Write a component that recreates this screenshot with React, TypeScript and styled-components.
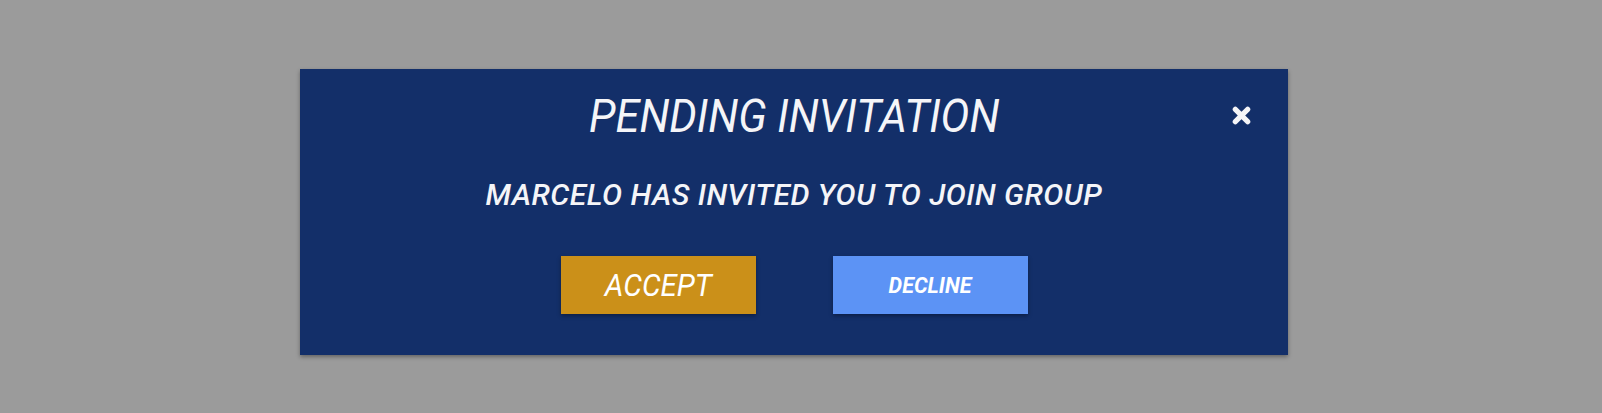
import * as React from "react";
import styled, { createGlobalStyle } from "styled-components";

const GlobalStyle = createGlobalStyle`
  html, body {
    margin: 0;
    padding: 0;
    background: #9b9b9b;
    font-family: Roboto, "Liberation Sans", sans-serif;
  }
`;

const Page = styled.div`
  height: 413px;
  padding-top: 69px;
  padding-left: 300px;
  box-sizing: border-box;
`;

const Modal = styled.div`
  position: relative;
  width: 988px;
  height: 286px;
  box-sizing: border-box;
  padding-top: 26px;
  background: #132f69;
  box-shadow: 0 2px 4px rgba(0, 0, 0, 0.35);
  display: flex;
  flex-direction: column;
  align-items: center;
  color: #f5f5f8;
  font-style: italic;
`;

const Title = styled.h1`
  margin: 0;
  font-size: 46px;
  line-height: 42px;
  font-weight: 400;
  transform: scaleX(0.94);
`;

const Message = styled.p`
  margin: 43px 0 0;
  font-size: 30px;
  line-height: 30px;
  font-weight: 500;
  letter-spacing: 0.5px;
`;

const Actions = styled.div`
  display: flex;
  gap: 77px;
  margin-top: 46px;
`;

const Button = styled.button<{ $variant: "accept" | "decline" }>`
  width: 195px;
  height: 58px;
  border: none;
  padding: 0;
  color: #fff;
  font-family: Roboto, "Liberation Sans", sans-serif;
  font-style: italic;
  background: ${({ $variant }) => ($variant === "accept" ? "#cb9019" : "#5c93f5")};
  font-size: ${({ $variant }) => ($variant === "accept" ? "31px" : "21.5px")};
  font-weight: ${({ $variant }) => ($variant === "accept" ? 400 : 700)};
  box-shadow: 0 2px 4px rgba(0, 0, 0, 0.35);
  cursor: pointer;
`;

const Label = styled.span<{ $narrow?: boolean }>`
  display: inline-block;
  transform: ${({ $narrow }) => ($narrow ? "scaleX(0.95)" : "none")};
`;

const Close = styled.button`
  position: absolute;
  top: 37px;
  right: 37px;
  width: 19px;
  height: 19px;
  padding: 0;
  border: none;
  background: none;
  cursor: pointer;
  display: flex;
`;

const CloseIcon = () => (
  <svg width="19" height="19" viewBox="0 0 20 20">
    <path
      d="M3.5 3.5 L16.5 16.5 M16.5 3.5 L3.5 16.5"
      stroke="#f5f5f8"
      strokeWidth="5.5"
      strokeLinecap="round"
      fill="none"
    />
  </svg>
);

export default function App() {
  return (
    <>
      <GlobalStyle />
      <Page>
        <Modal>
          <Title>PENDING INVITATION</Title>
          <Message>MARCELO HAS INVITED YOU TO JOIN GROUP</Message>
          <Actions>
            <Button $variant="accept">
              <Label $narrow>ACCEPT</Label>
            </Button>
            <Button $variant="decline">
              <Label>DECLINE</Label>
            </Button>
          </Actions>
          <Close aria-label="Close">
            <CloseIcon />
          </Close>
        </Modal>
      </Page>
    </>
  );
}
